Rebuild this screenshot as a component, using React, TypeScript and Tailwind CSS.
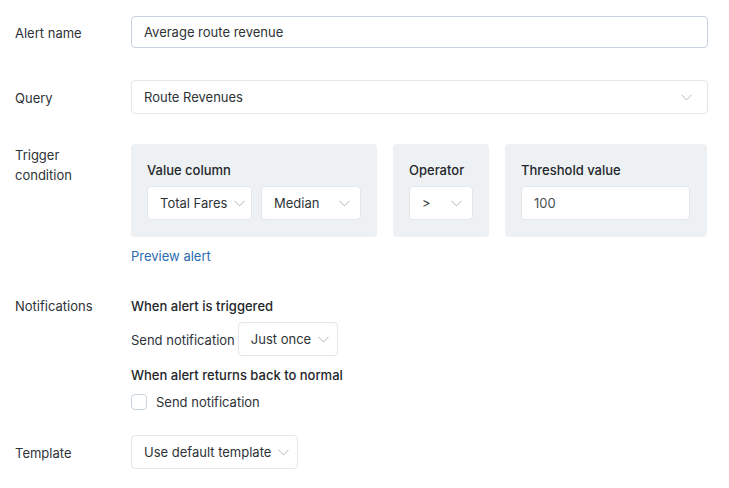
import React from "react";

function Chevron({ className = "" }: { className?: string }) {
  return (
    <svg width="11" height="7" viewBox="0 0 11 7" fill="none" className={`shrink-0 ${className}`}>
      <path d="M0.5 0.8 L5.5 6 L10.5 0.8" stroke="#b3b8bd" strokeWidth="1" />
    </svg>
  );
}

function Select({ value, className = "" }: { value: string; className?: string }) {
  return (
    <div
      className={`flex h-[34px] items-center justify-between gap-[7px] rounded-[4px] border border-[#e3e6ea] bg-white pl-3 pr-[10px] text-[13px] text-[#2e3338] ${className}`}
    >
      <span className="whitespace-nowrap pt-px">{value}</span>
      <Chevron />
    </div>
  );
}

function Label({ children, className = "" }: { children: React.ReactNode; className?: string }) {
  return <div className={`w-[131px] shrink-0 pl-[15px] text-[13px] leading-5 text-[#2e3338] ${className}`}>{children}</div>;
}

export default function App() {
  return (
    <div
      className="min-h-[488px] w-[729px] bg-white pt-4 text-[13px] text-[#2e3338]"
      style={{ fontFamily: "Inter, 'Noto Sans', sans-serif" }}
    >
      {/* Alert name */}
      <div className="flex items-center">
        <Label className="pt-0.5">Alert name</Label>
        <div className="flex h-8 w-[577px] items-center rounded-[4px] border border-[#c9d3dd] bg-white px-3 pt-px text-[13px] text-[#2e3338]">
          Average route revenue
        </div>
      </div>

      {/* Query */}
      <div className="mt-8 flex items-center">
        <Label className="pt-0.5">Query</Label>
        <Select value="Route Revenues" className="w-[577px] pr-[15px]" />
      </div>

      {/* Trigger condition */}
      <div className="mt-[30px] flex items-start">
        <Label className="pt-px">
          Trigger
          <br />
          condition
        </Label>
        <div className="flex flex-col">
          <div className="flex gap-4">
            <div className="rounded-[4px] bg-[#eef1f4] px-4 pb-[17px] pt-4">
              <div className="font-[450] leading-5 text-[#23272b]">Value column</div>
              <div className="mt-[6px] flex gap-[9px]">
                <Select value="Total Fares" className="w-[105px]" />
                <Select value="Median" className="w-[100px]" />
              </div>
            </div>
            <div className="rounded-[4px] bg-[#eef1f4] px-4 pb-[17px] pt-4">
              <div className="font-[450] leading-5 text-[#23272b]">Operator</div>
              <div className="mt-[6px] flex">
                <Select value=">" className="w-[64px]" />
              </div>
            </div>
            <div className="w-[202px] rounded-[4px] bg-[#eef1f4] pb-[17px] pl-4 pr-[17px] pt-4">
              <div className="font-[450] leading-5 text-[#23272b]">Threshold value</div>
              <div className="mt-[6px] flex h-[34px] items-center rounded-[4px] border border-[#e3e6ea] bg-white px-3 pt-px text-[13px] text-[#4a4f55]">
                100
              </div>
            </div>
          </div>
          <div className="mt-2 pt-px leading-5 text-[#2b6cb0]">Preview alert</div>
        </div>
      </div>

      {/* Notifications */}
      <div className="mt-[30px] flex items-start">
        <Label>Notifications</Label>
        <div className="flex flex-col">
          <div className="font-[450] leading-5 text-[#23272b]">When alert is triggered</div>
          <div className="mt-[6px] flex items-center gap-[3px]">
            <span className="pt-0.5 leading-5">Send notification</span>
            <Select value="Just once" className="w-[100px]" />
          </div>
          <div className="mt-[9px] font-[450] leading-5 text-[#23272b]">When alert returns back to normal</div>
          <div className="mt-[7px] flex items-center gap-[9px]">
            <div className="h-[16px] w-[16px] rounded-[4px] border border-[#c9d3dd] bg-white" />
            <span className="leading-5">Send notification</span>
          </div>
        </div>
      </div>

      {/* Template */}
      <div className="mt-[23px] flex items-center">
        <Label className="pt-0.5">Template</Label>
        <Select value="Use default template" className="w-[167px]" />
      </div>
    </div>
  );
}
